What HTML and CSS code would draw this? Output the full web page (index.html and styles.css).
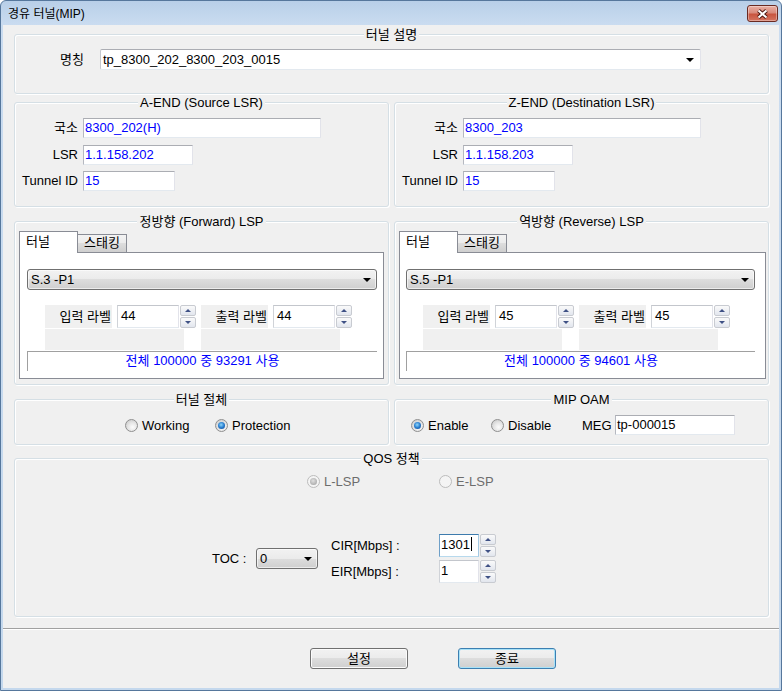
FILE: index.html
```html
<!DOCTYPE html>
<html lang="ko">
<head>
  <meta charset="UTF-8" />
  <title>경유 터널(MIP)</title>
  <link rel="stylesheet" href="styles.css">
</head>
<body>
<div class="window">
  <div class="titlebar">
    <span class="title">경유 터널(MIP)</span>
    <button class="close-btn">
      <svg width="13" height="10" viewBox="0 0 13 10">
        <path d="M2.5 1.5 L10.5 8.5 M10.5 1.5 L2.5 8.5" stroke="#4a1510" stroke-width="4" fill="none"/>
        <path d="M2.5 1.5 L10.5 8.5 M10.5 1.5 L2.5 8.5" stroke="#fff" stroke-width="2" fill="none"/>
      </svg>
    </button>
  </div>

  <div class="client">
    <div class="groups">
      <!-- 터널 설명 -->
      <div class="group g-desc">
        <div class="group-title">터널 설명</div>
        <div class="name-row">
          <span class="name-lbl">명칭</span>
          <div class="combo-edit">
            <span>tp_8300_202_8300_203_0015</span>
            <span class="arrow"></span>
          </div>
        </div>
      </div>

      <!-- A-END / Z-END -->
      <div class="pair row-end">
        <div class="group">
          <div class="group-title">A-END (Source LSR)</div>
          <div class="end-grid">
            <span class="lbl">국소</span><div class="edit val w-long">8300_202(H)</div>
            <span class="lbl">LSR</span><div class="edit val w-mid">1.1.158.202</div>
            <span class="lbl">Tunnel ID</span><div class="edit val w-short">15</div>
          </div>
        </div>
        <div class="group">
          <div class="group-title">Z-END (Destination LSR)</div>
          <div class="end-grid">
            <span class="lbl">국소</span><div class="edit val w-long">8300_203</div>
            <span class="lbl">LSR</span><div class="edit val w-mid">1.1.158.203</div>
            <span class="lbl">Tunnel ID</span><div class="edit val w-short">15</div>
          </div>
        </div>
      </div>

      <!-- LSP -->
      <div class="pair row-lsp">
        <div class="group">
          <div class="group-title">정방향 (Forward) LSP</div>
          <div class="lsp-body">
            <div class="tabs">
              <div class="tab on">터널</div>
              <div class="tab">스태킹</div>
            </div>
            <div class="tab-panel">
              <div class="combo-drop wide"><span>S.3 -P1</span><span class="arrow"></span></div>
              <div class="spin-row">
                <div class="spin-block">
                  <div class="spin-top">
                    <span class="spin-lbl">입력 라벨</span>
                    <div class="edit num">44</div>
                    <div class="spin"><span class="up"></span><span class="down"></span></div>
                  </div>
                  <div class="spin-blank"></div>
                </div>
                <div class="spin-block">
                  <div class="spin-top">
                    <span class="spin-lbl">출력 라벨</span>
                    <div class="edit num">44</div>
                    <div class="spin"><span class="up"></span><span class="down"></span></div>
                  </div>
                  <div class="spin-blank"></div>
                </div>
              </div>
              <div class="status">전체 100000 중 93291 사용</div>
            </div>
          </div>
        </div>
        <div class="group">
          <div class="group-title">역방향 (Reverse) LSP</div>
          <div class="lsp-body rev">
            <div class="tabs">
              <div class="tab on">터널</div>
              <div class="tab">스태킹</div>
            </div>
            <div class="tab-panel">
              <div class="combo-drop wide"><span>S.5 -P1</span><span class="arrow"></span></div>
              <div class="spin-row">
                <div class="spin-block">
                  <div class="spin-top">
                    <span class="spin-lbl">입력 라벨</span>
                    <div class="edit num">45</div>
                    <div class="spin"><span class="up"></span><span class="down"></span></div>
                  </div>
                  <div class="spin-blank"></div>
                </div>
                <div class="spin-block">
                  <div class="spin-top">
                    <span class="spin-lbl">출력 라벨</span>
                    <div class="edit num">45</div>
                    <div class="spin"><span class="up"></span><span class="down"></span></div>
                  </div>
                  <div class="spin-blank"></div>
                </div>
              </div>
              <div class="status">전체 100000 중 94601 사용</div>
            </div>
          </div>
        </div>
      </div>

      <!-- 절체 / OAM -->
      <div class="pair row-opts">
        <div class="group">
          <div class="group-title">터널 절체</div>
          <div class="opt-row switch">
            <label class="radio w90"><span class="rb"></span>Working</label>
            <label class="radio"><span class="rb checked"></span>Protection</label>
          </div>
        </div>
        <div class="group">
          <div class="group-title">MIP OAM</div>
          <div class="opt-row oam">
            <label class="radio w80"><span class="rb checked"></span>Enable</label>
            <label class="radio w91"><span class="rb"></span>Disable</label>
            <span class="meg-lbl">MEG</span>
            <div class="edit meg">tp-000015</div>
          </div>
        </div>
      </div>

      <!-- QOS -->
      <div class="group g-qos">
        <div class="group-title">QOS 정책</div>
        <div class="qos-radios">
          <label class="radio off w132"><span class="rb checked"></span>L-LSP</label>
          <label class="radio off"><span class="rb"></span>E-LSP</label>
        </div>
        <div class="qos-cluster">
          <span class="toc-lbl">TOC :</span>
          <div class="combo-drop toc"><span>0</span><span class="arrow"></span></div>
          <div class="rate-grid">
            <span class="rate-lbl">CIR[Mbps] :</span>
            <div class="edit rate focus">1301<span class="caret"></span></div>
            <div class="spin"><span class="up"></span><span class="down"></span></div>
            <span class="rate-lbl">EIR[Mbps] :</span>
            <div class="edit rate">1</div>
            <div class="spin"><span class="up"></span><span class="down"></span></div>
          </div>
        </div>
      </div>
    </div>

    <div class="separator"></div>

    <div class="buttons">
      <button class="btn">설정</button>
      <button class="btn default">종료</button>
    </div>
  </div>
</div>
</body>
</html>
```

FILE: styles.css
```css
* {
  box-sizing: border-box;
}

body {
  margin: 0;
  background: #fff;
  font-family: "Liberation Sans", "Noto Sans CJK KR", sans-serif;
  font-size: 13px;
  line-height: 15px;
  color: #000;
}

/* 창 틀 */
.window {
  width: 782px;
  height: 691px;
  border: 1px solid #56779c;
  border-radius: 6px 6px 0 0;
  background: linear-gradient(#b8cfe8, #cadcf0 24px, #c4d8ed);
  padding: 0 2px 2px 2px;
  display: flex;
  flex-direction: column;
}

.titlebar {
  height: 24px;
  display: flex;
  align-items: flex-start;
  justify-content: space-between;
  padding-left: 5px;
}

.title {
  font-size: 12px;
  line-height: 14px;
  margin-top: 6px;
}

.close-btn {
  width: 31px;
  height: 17px;
  margin-top: 4px;
  margin-right: 1px;
  padding: 0;
  border: 1px solid #6a2a22;
  border-radius: 3px;
  background: linear-gradient(#eab0a4, #d98a7b 45%, #c9553f 55%, #d47460);
  box-shadow: inset 0 0 0 1px rgba(255, 255, 255, 0.35);
  display: flex;
  align-items: center;
  justify-content: center;
}

.client {
  flex: 1;
  background: #f0f0f0;
  display: flex;
  flex-direction: column;
}

.groups {
  padding: 9px 10px 0 11px;
}

/* 그룹 박스 */
.group {
  border: 1px solid #d5dfe5;
  border-radius: 3px;
  box-shadow: inset 1px 1px 0 #fff, 1px 1px 0 #fff;
}

.group-title {
  display: table;
  margin: -8px auto 0;
  padding: 0 2px;
  background: #f0f0f0;
  line-height: 15px;
}

.pair {
  display: grid;
  grid-template-columns: 375px 375px;
  column-gap: 5px;
}

.g-desc { height: 60px; }
.row-end { margin-top: 8px; }
.row-end .group { height: 105px; }
.row-lsp { margin-top: 14px; }
.row-lsp .group { height: 164px; }
.row-opts { margin-top: 14px; }
.row-opts .group { height: 46px; }
.g-qos { margin-top: 13px; height: 159px; }

/* 입력 상자 */
.edit {
  height: 20px;
  background: #fff;
  border: 1px solid;
  border-color: #abadb3 #e2e3ea #e3e9ef #b5b8c0;
  padding: 0 1px;
  line-height: 18px;
  white-space: nowrap;
}

.val { color: #0000ff; }

.arrow {
  width: 0;
  height: 0;
  border-left: 4px solid transparent;
  border-right: 4px solid transparent;
  border-top: 4px solid #000;
}

/* 명칭 */
.name-row {
  display: flex;
  align-items: center;
  margin-top: 7px;
  padding-left: 45px;
}

.name-lbl { width: 40px; }

.combo-edit {
  width: 601px;
  height: 21px;
  background: #fff;
  border: 1px solid;
  border-color: #abadb3 #e2e3ea #e3e9ef #c5c8ce;
  border-radius: 2px;
  display: flex;
  align-items: center;
  justify-content: space-between;
  padding: 0 6px 0 2px;
}

/* A/Z END */
.end-grid {
  display: grid;
  grid-template-columns: 63px auto;
  grid-template-rows: 27px 26px 20px;
  column-gap: 5px;
  align-items: start;
  margin-top: 8px;
}

.end-grid .lbl {
  text-align: right;
  line-height: 20px;
  white-space: nowrap;
}

.w-long { width: 238px; }
.w-mid { width: 110px; }
.w-short { width: 92px; }

/* LSP 탭 */
.lsp-body {
  margin: 2px 4px 0;
}

.lsp-body.rev {
  margin: 2px 2px 0 4px;
}

.tabs {
  display: flex;
  align-items: flex-end;
  height: 21px;
}

.tab {
  border: 1px solid #898c95;
  border-bottom: none;
  height: 18px;
  width: 50px;
  margin-left: -1px;
  text-align: center;
  line-height: 16px;
  background: linear-gradient(#f3f3f3, #ebebeb 50%, #dddddd 50%, #cfcfcf);
}

.tab.on {
  position: relative;
  z-index: 1;
  align-self: flex-start;
  height: 22px;
  width: 59px;
  margin-left: 0;
  margin-bottom: -1px;
  text-align: left;
  padding-left: 6px;
  line-height: 20px;
  background: #fff;
}

.tab-panel {
  height: 127px;
  border: 1px solid #898c95;
  background: #fff;
  padding-top: 16px;
}

.combo-drop {
  height: 21px;
  border: 1px solid #707070;
  border-radius: 3px;
  background: linear-gradient(#f2f2f2, #ebebeb 50%, #dddddd 50%, #cfcfcf);
  box-shadow: inset 0 0 0 1px rgba(255, 255, 255, 0.6);
  display: flex;
  align-items: center;
  justify-content: space-between;
  padding: 0 5px 0 3px;
}

.combo-drop.wide {
  width: 350px;
  margin-left: 7px;
}

.rev .combo-drop.wide {
  width: 349px;
  margin-left: 6px;
}

.spin-row {
  display: flex;
  gap: 5px;
  margin-top: 15px;
  padding-left: 25px;
}

.rev .spin-row { padding-left: 23px; }

.spin-top {
  display: flex;
}

.spin-lbl {
  width: 67px;
  height: 23px;
  background: #f0f0f0;
  text-align: right;
  padding-right: 1px;
  line-height: 23px;
  white-space: nowrap;
}

.edit.num {
  width: 62px;
  height: 23px;
  margin-left: 5px;
  padding: 2px 3px;
  line-height: 15px;
  border-color: #c3c6cc #e2e3ea #e3e9ef #d0d3d8;
}

.spin {
  width: 16px;
  height: 23px;
  margin-left: 1px;
  display: flex;
  flex-direction: column;
  gap: 1px;
}

.spin span {
  flex: 1;
  border: 1px solid #c8cbd1;
  border-radius: 2px;
  background: linear-gradient(#fafafa, #e2e6ee);
  display: flex;
  align-items: center;
  justify-content: center;
}

.spin .up::after,
.spin .down::after {
  content: "";
  width: 0;
  height: 0;
  border-left: 3px solid transparent;
  border-right: 3px solid transparent;
}

.spin .up::after { border-bottom: 3px solid #3f5185; }
.spin .down::after { border-top: 3px solid #3f5185; }

.spin-blank {
  width: 139px;
  height: 21px;
  margin-top: 1px;
  background: #f0f0f0;
}

.status {
  width: 350px;
  height: 20px;
  margin: 1px 0 0 7px;
  border-top: 1px solid #a0a0a0;
  border-left: 1px solid #a0a0a0;
  text-align: center;
  line-height: 18px;
  color: #0000ff;
}

.rev .status {
  width: 349px;
  margin-left: 6px;
}

/* 라디오 */
.radio {
  display: inline-flex;
  align-items: center;
  white-space: nowrap;
}

.w80 { width: 80px; }
.w90 { width: 90px; }
.w91 { width: 91px; }
.w132 { width: 132px; }

.rb {
  width: 13px;
  height: 13px;
  margin-right: 4px;
  border-radius: 50%;
  border: 1px solid #8f8f8f;
  background: radial-gradient(circle at 60% 65%, #fcfcfc 0, #e6e6e6 45%, #d2d2d2 75%);
  display: flex;
  align-items: center;
  justify-content: center;
}

.rb.checked::after {
  content: "";
  width: 7px;
  height: 7px;
  border-radius: 50%;
  background: radial-gradient(circle at 45% 40%, #8fd7fb 0, #2a7fd0 50%, #0d3f86 100%);
}

.radio.off { color: #6d6d6d; }
.radio.off .rb { border-color: #bcbcbc; background: #f4f4f4; }
.radio.off .rb.checked::after { background: radial-gradient(circle at 45% 40%, #e0e0e0, #9a9a9a); }

.opt-row {
  display: flex;
  align-items: center;
  height: 20px;
  margin-top: 8px;
}

.opt-row.switch { padding-left: 110px; }
.opt-row.oam { padding-left: 16px; }

.meg-lbl { width: 33px; }

.edit.meg {
  width: 120px;
  padding: 0 1px;
}

/* QOS */
.qos-radios {
  display: flex;
  align-items: center;
  height: 15px;
  margin-top: 8px;
  padding-left: 292px;
}

.qos-cluster {
  display: flex;
  align-items: center;
  margin-top: 45px;
  padding-left: 197px;
}

.toc-lbl { width: 44px; }

.combo-drop.toc {
  width: 62px;
  padding-left: 3px;
}

.rate-grid {
  display: grid;
  grid-template-columns: 108px 40px 16px;
  grid-template-rows: 23px 23px;
  row-gap: 3px;
  align-items: center;
  margin-left: 13px;
}

.edit.rate {
  width: 40px;
  height: 23px;
  padding: 2px 1px;
  line-height: 15px;
  border-color: #c3c6cc #e2e3ea #e3e9ef #d0d3d8;
  display: flex;
  align-items: flex-start;
}

.edit.rate.focus {
  border-color: #3d7bad #a4c9e3 #b7d9ed #6fa0c8;
}

.caret {
  width: 1px;
  height: 14px;
  margin-left: 1px;
  background: #000;
}

/* 하단 */
.separator {
  margin-top: 11px;
  border-top: 1px solid #a0a0a0;
  border-bottom: 1px solid #fff;
}

.buttons {
  display: flex;
  gap: 50px;
  margin-top: 18px;
  padding-left: 307px;
}

.btn {
  width: 98px;
  height: 21px;
  padding: 0;
  font: inherit;
  line-height: 17px;
  border: 1px solid #707070;
  border-radius: 3px;
  background: linear-gradient(#f2f2f2, #ebebeb 50%, #dddddd 50%, #cfcfcf);
  box-shadow: inset 0 0 0 1px #fbfbfb;
}

.btn.default {
  border-color: #3c7fb1;
  box-shadow: inset 0 0 0 1px #a8e2f8;
}
```
